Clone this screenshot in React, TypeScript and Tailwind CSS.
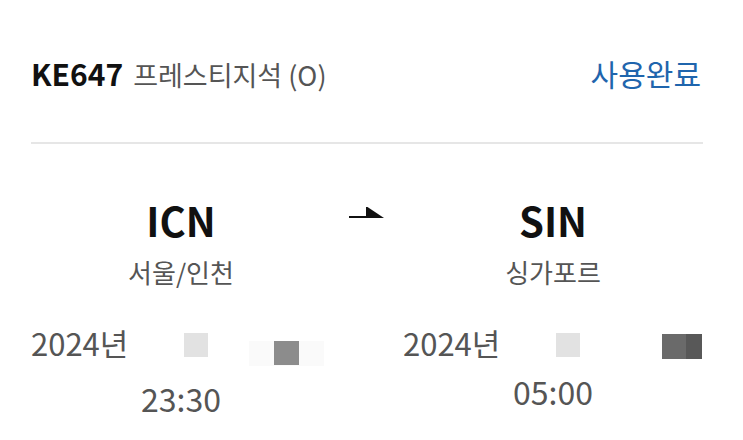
import React from "react";

const font = { fontFamily: '"Noto Sans CJK KR", "Noto Sans", sans-serif' };

interface Stop {
  code: string;
  city: string;
  time: string;
  tail: React.ReactNode;
}

const Arrow: React.FC = () => (
  <svg width="36" height="14" viewBox="0 0 36 14" className="mt-[12px]">
    <rect x="0" y="10" width="18" height="2" fill="#111" />
    <path d="M17 1 L18.5 1 L35 12 L17 12 Z" fill="#111" />
  </svg>
);

const StopColumn: React.FC<{ stop: Stop }> = ({ stop }) => (
  <div className="flex flex-col items-center">
    <div className="text-[40px] font-bold leading-none text-[#111] mt-[56px]">
      {stop.code}
    </div>
    <div className="text-[26px] leading-none text-[#555] mt-[19px]">
      {stop.city}
    </div>
    <div className="w-full flex items-start mt-[42px]">
      <div className="w-[153px] text-[31px] leading-none text-[#555]">
        2024년
      </div>
      <div className="w-[24px] h-[24px] bg-[#e2e2e2] mt-[6px]" />
      {stop.tail}
    </div>
    <div className="text-[32px] leading-none text-[#555] mt-[16px]">
      {stop.time}
    </div>
  </div>
);

const departure: Stop = {
  code: "ICN",
  city: "서울/인천",
  time: "23:30",
  tail: (
    <div className="ml-[41px] mt-[14px] w-[75px] h-[25px] bg-[#fafafa] flex justify-center">
      <div className="w-[25px] h-[24px] bg-[#8c8c8c]" />
    </div>
  ),
};

const arrival: Stop = {
  code: "SIN",
  city: "싱가포르",
  time: "05:00",
  tail: (
    <div className="ml-[82px] mt-[7px] flex">
      <div className="w-[24px] h-[25px] bg-[#6a6a6a]" />
      <div className="w-[16px] h-[25px] bg-[#585858]" />
    </div>
  ),
};

export default function App() {
  return (
    <div
      className="w-[743px] h-[440px] overflow-hidden bg-white pl-[31px] pr-[40px]"
      style={font}
    >
      <div className="pt-[58px] flex items-baseline justify-between">
        <div className="flex items-baseline">
          <span className="text-[30px] font-bold leading-none text-[#111]">
            KE647
          </span>
          <span className="ml-[10px] text-[27px] leading-none text-[#555]">
            프레스티지석 (O)
          </span>
        </div>
        <span className="mr-[2px] text-[30px] leading-none text-[#1f65ad]">
          사용완료
        </span>
      </div>

      <div className="mt-[54px] h-[2px] bg-[#e6e6e6]" />

      <div className="grid grid-cols-[1fr_72px_1fr]">
        <StopColumn stop={departure} />
        <div className="flex justify-center pt-[50px]">
          <Arrow />
        </div>
        <StopColumn stop={arrival} />
      </div>
    </div>
  );
}
